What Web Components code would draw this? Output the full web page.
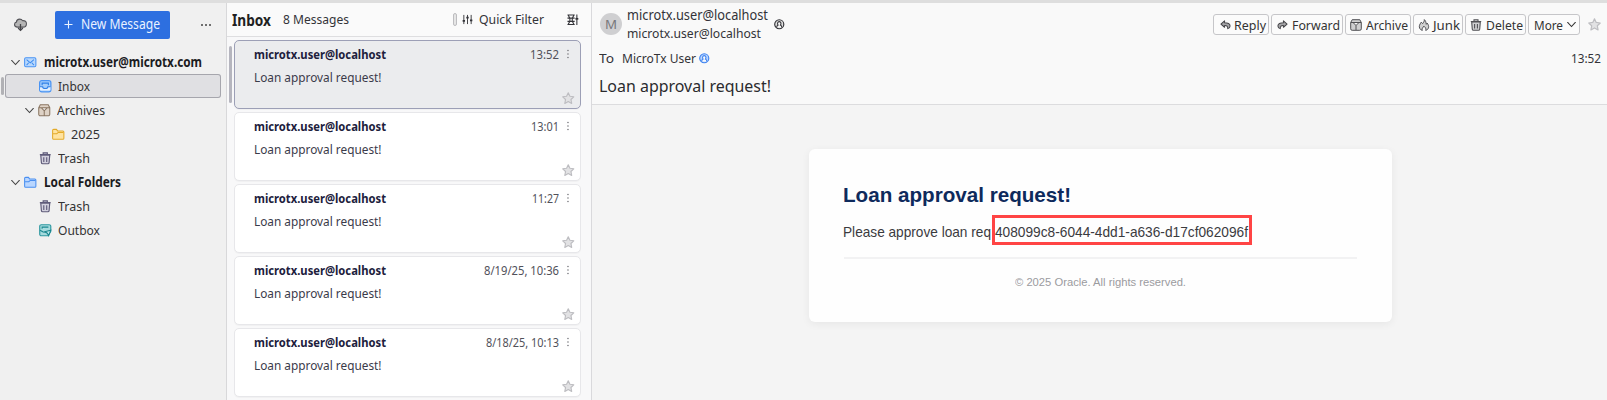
<!DOCTYPE html>
<html lang="en">
<head>
<meta charset="utf-8">
<title>Inbox</title>
<style>
html,body{margin:0;height:100%;overflow:hidden}
body{font-family:"Noto Sans","Open Sans",sans-serif;font-size:13.3px;color:#333338;background:#f4f4f4}
</style>
</head>
<body>
<mail-app></mail-app>
<script>
const ICONS = {
 chevron:'<path d="M1.8 3.8 6 8.2l4.2-4.4" fill="none" stroke="currentColor" stroke-width="1.15" stroke-linecap="round"/>',
 cloud:'<path d="M3.2 8.400C1.500 8.400.5 7.400.5 6c0-1.200.7-2 1.700-2.200C2.300 2.200 3.500 1 5.200 1c1.300 0 2.200.5 2.800 1.500 2-.3 3.500.8 3.500 2.800 0 1.900-1.200 3.100-3 3.100z" fill="#b5b5b5" stroke="#55555a"/><path d="M6 5.500v6M3.800 9.200 6 11.400l2.200-2.200" fill="none" stroke="#45454a" stroke-width="1.200"/>',
 mail:'<rect x=".6" y="1.600" width="10.800" height="8.800" rx="1.200" fill="#b9d8fc" stroke="#4a94f4"/><path d="m2.500 3.500 3.500 3 3.500-3M2.500 8.700l2-2.200M9.500 8.700l-2-2.200" fill="none" stroke="#3b8bf0"/>',
 inbox:'<rect x=".6" y=".6" width="10.800" height="10.800" rx="2" fill="#a4cdfb" stroke="#4a94f4" stroke-width="1.200"/><path d="M1 6.500h2.500c0 1 1 1.700 2.500 1.700s2.500-.7 2.500-1.700H11V10H1z" fill="#e4f0ff"/><path d="M1 6.500h2.500c0 1 1 1.700 2.500 1.700s2.500-.7 2.500-1.700H11M3 5V3h6v2" fill="none" stroke="#2f80e8" stroke-width="1.100"/>',
 archive:'<path d="M.7 3.500 2.200.7h7.600l1.500 2.800v6.300a1.500 1.500 0 0 1-1.500 1.500H2.200a1.500 1.500 0 0 1-1.500-1.500zM.7 3.500h10.600M6 6.500V11M3.300 3.800 6 6.500l2.700-2.700" fill="var(--fill,#ded2c6)" stroke="var(--line,#8a7662)"/>',
 folder:'<path d="M.6 3V2.300a1 1 0 0 1 1-1h2.600l1.200 1.500h5a1 1 0 0 1 1 1v6a1 1 0 0 1-1 1H1.600a1 1 0 0 1-1-1z" fill="var(--fill)" stroke="var(--line)"/><path d="M1 5.500h3.600L6 4.300h5" fill="none" stroke="var(--line)"/>',
 trash:'<path d="M4 2V.8h4V2M.8 2.500h10.400M1.700 3l.6 7.200a1.200 1.200 0 0 0 1.200 1.100h5a1.200 1.200 0 0 0 1.200-1.100l.6-7.200zM4.600 5v4.500M7.400 5v4.500" fill="var(--fill,#d3d1de)" stroke="var(--line,#5f5b7a)" stroke-width="1.100"/>',
 outbox:'<path d="M2.200.7h7.600a1.500 1.500 0 0 1 1.500 1.500V7l-2.600 4.300H2.200A1.500 1.500 0 0 1 .7 9.800V2.200A1.500 1.500 0 0 1 2.200.7z" fill="#a5dadd" stroke="#2c98a0" stroke-width="1.100"/><path d="M3 4.500V3h6M1 6l3 1.700 1.500.3M5.500 7.500 11.300 6l-2 5.300-1.300-2.500z" fill="#bfe8e9" stroke="#17858e"/>',
 sliders:'<path d="M2 1v10M6 1v10M10 1v10" fill="none" stroke="currentColor" stroke-width="1"/><path d="M.7 7.500h2.600M4.700 4h2.600M8.700 7h2.600" stroke="currentColor" stroke-width="2"/>',
 display:'<path d="M.5 1h7.500M.5 4.300h7.500M.5 7.700h7.500M.5 11h7.500M1 .8l2 3.500v3.400L1 11.200M7.500.8l-2 3.500v3.400l2 3.500M10.300.5v11" fill="none" stroke="currentColor" stroke-width="1.100"/><path d="M8.800 5h3" stroke="currentColor" stroke-width="1.800"/>',
 dots:'<circle cx="6" cy="1.800" r=".95"/><circle cx="6" cy="6" r=".95"/><circle cx="6" cy="10.200" r=".95"/>',
 star:'<path d="m6 .8 1.600 3.300 3.700.5-2.700 2.600.7 3.800L6 9.200 2.700 11l.7-3.800L.7 4.600l3.700-.5z" fill="#e2e2e4" stroke="#bdbdc1" stroke-width="1.100" stroke-linejoin="round"/>',
 person:'<circle cx="6" cy="6" r="5.200" fill="var(--fill,#ddd)" stroke="currentColor" stroke-width="1.300"/><path d="M3.300 9.800V8.300c0-.8.7-1 1.400-1.300C3.500 5.500 4 3 6 3s2.500 2.500 1.300 4c.7.3 1.400.5 1.400 1.300v1.500" fill="#fafafa" stroke="currentColor" stroke-width="1.200"/>',
 reply:'<path d="M5 2 1 5.500 5 9V7c2.500-.2 3.500.800 3.500 3.500C10 10 11 9 11 7.500 11 5 8.500 4 5 4z" fill="#a5a5a8" stroke="#444448" stroke-width="1.100" stroke-linejoin="round"/>',
 forward:'<path d="m7 2 4 3.500L7 9V7c-2.500-.2-3.500.800-3.500 3.500C2 10 1 9 1 7.500 1 5 3.500 4 7 4z" fill="#a5a5a8" stroke="#444448" stroke-width="1.100" stroke-linejoin="round"/>',
 junk:'<path d="M6.300.6c.3 2-1 2.800-1.600 4L3.200 3.200C1.700 5.500.7 7.200 1.700 9.300c.5 1.100 1.300 1.700 2.600 2.100-.6-1.700.2-2.900 1.700-4.200 1.500 1.300 2.300 2.500 1.700 4.200 1.500-.4 2.400-1.300 2.800-2.600.5-1.800-.3-3.200-1.300-4.700l-.9 1.200C8 3.400 7.600 1.600 6.300.6z" fill="#d0d0d0" stroke="#505055" stroke-width="1" stroke-linejoin="round"/>'
};
class UiIcon extends HTMLElement{
 connectedCallback(){
  const s=this.getAttribute('size')||12;
  this.attachShadow({mode:'open'}).innerHTML=`<style>:host{display:block;flex:none;width:${s}px;height:${s}px}svg{display:block;overflow:visible}</style><svg width="${s}" height="${s}" viewBox="0 0 12 12" fill="currentColor">${ICONS[this.getAttribute('name')]}</svg>`;
 }
}
/* One line of text, condensed or widened to the width given in pixels. */
class FitText extends HTMLElement{
 connectedCallback(){
  const w=+this.getAttribute('w');
  const r=this.attachShadow({mode:'open'});
  r.innerHTML=`<style>:host{display:block;flex:none;width:${w}px;white-space:nowrap}span{display:inline-block;transform-origin:0 50%}</style><span><slot></slot></span>`;
  const s=r.querySelector('span');
  s.style.transform=`scaleX(${w/s.getBoundingClientRect().width})`;
 }
}
class FolderRow extends HTMLElement{
 connectedCallback(){
  const a=n=>this.getAttribute(n);
  const on=this.hasAttribute('selected');
  this.attachShadow({mode:'open'}).innerHTML=`<style>
  :host{display:flex;align-items:center;height:24px;box-sizing:border-box;position:relative;margin:0 5px;padding-left:${+a('indent')}px;color:#333}
  :host([strong]){font-weight:700;color:#1c1c1f}
  :host([selected]){background:#e0e0e3;box-shadow:inset 0 0 0 1px #a6a6ad;border-radius:3px}
  i{position:absolute;left:-4px;top:3px;width:3px;height:18px;border-radius:2px;background:#b1b1b5}
  .c{width:14px;color:#444}
  fit-text{margin:0 0 1px 6px;line-height:18px}
  :host([strong]) fit-text{margin-left:7px}
  </style>${on?'<i></i>':''}<div class="c">${this.hasAttribute('open')?'<ui-icon name="chevron" size="11"></ui-icon>':''}</div>
  <ui-icon name="${a('icon')}" size="12.500"></ui-icon><fit-text w="${a('w')}">${a('label')}</fit-text>`;
 }
}
class SideBar extends HTMLElement{
 connectedCallback(){
  this.attachShadow({mode:'open'}).innerHTML=`<style>
  :host{display:block;width:227px;box-sizing:border-box;background:#f0f0f0;border-right:1px solid #d8d8da}
  header{display:flex;align-items:center;height:29px;padding:7px 0 11px 14px}
  button{all:unset;display:flex;align-items:center;box-sizing:border-box;width:115px;height:28px;margin-left:28px;padding-left:9px;background:#2d6fe0;color:#eaf2ff;border-radius:2px;font-size:13.800px}
  button fit-text{margin-bottom:1px;line-height:20px}
  button svg{margin-right:8px}
  .m{display:flex;gap:2px;margin-left:31px}.m b{width:2px;height:2px;border-radius:1px;background:#444}
  .b{--fill:#b9d6ff;--line:#4a8ff0}.y{--fill:#ffe3a0;--line:#e3aa28}
  </style><header><ui-icon name="cloud" size="13"></ui-icon>
  <button><svg width="9" height="9"><path d="M4.500 .5v8M.5 4.500h8" stroke="#eaf2ff" stroke-width="1.100"/></svg><fit-text w="79">New Message</fit-text></button>
  <div class="m"><b></b><b></b><b></b></div></header>
  <folder-row strong open indent="5" icon="mail" w="158" label="microtx.user@microtx.com"></folder-row>
  <folder-row selected indent="20" icon="inbox" w="32" label="Inbox"></folder-row>
  <folder-row open indent="19" icon="archive" w="48" label="Archives"></folder-row>
  <folder-row class="y" indent="33" icon="folder" w="29" label="2025"></folder-row>
  <folder-row indent="20" icon="trash" w="32" label="Trash"></folder-row>
  <folder-row class="b" strong open indent="5" icon="folder" w="77" label="Local Folders"></folder-row>
  <folder-row indent="20" icon="trash" w="32" label="Trash"></folder-row>
  <folder-row indent="20" icon="outbox" w="42" label="Outbox"></folder-row>`;
 }
}
class MessageCard extends HTMLElement{
 connectedCallback(){
  const a=n=>this.getAttribute(n);
  this.attachShadow({mode:'open'}).innerHTML=`<style>
  :host{display:block;position:relative;box-sizing:border-box;height:69px;margin-bottom:3px;padding:3px 6px 0 19px;background:#fff;border:1px solid #e7e7ea;border-radius:5px;box-shadow:0 1px 1px #00000008}
  :host([selected]){background:#ebecee;border-color:#9c9fb6}
  i{position:absolute;left:-6px;top:5px;width:3px;height:57px;border-radius:2px;background:#b5b5be}
  .r{display:flex;align-items:center;height:20px;line-height:20px}
  .n{font-weight:700;color:#20203c;font-size:13px}
  .t{margin-left:auto;color:#51515a}.s{margin-top:3px;color:#3b3b4a}.s fit-text{margin-bottom:1px}
  .d{color:#77777c;margin:0 1px 0 4px}
  .f{display:flex;justify-content:flex-end;margin-top:5px}
  </style>${this.hasAttribute('selected')?'<i></i>':''}
  <div class="r"><fit-text class="n" w="132">microtx.user@localhost</fit-text><fit-text class="t" w="${a('w')}">${a('time')}</fit-text><ui-icon class="d" name="dots" size="10"></ui-icon></div>
  <div class="r s"><fit-text w="127.500">Loan approval request!</fit-text></div>
  <div class="f"><ui-icon name="star" size="12.500"></ui-icon></div>`;
 }
}
class MessageList extends HTMLElement{
 connectedCallback(){
  this.attachShadow({mode:'open'}).innerHTML=`<style>
  :host{display:block;width:365px;box-sizing:border-box;background:#f8f8f9;border-right:1px solid #d9d9dc;overflow:hidden}
  header{display:flex;align-items:center;height:33px;padding:0 0 0 5px;background:#fafafa;border-bottom:1px solid #dedee0}
  .h{font-weight:700;font-size:15.500px;color:#1f1f22}
  u{width:2px;height:11px;border:1px solid #bdbdc0;background:#e5e5e5;border-radius:2px;margin:0 5px 0 104px}
  .q{margin-bottom:1px}
  main{padding:3px 10px 0 7px}
  </style><header><fit-text class="h" w="39">Inbox</fit-text><fit-text class="q" style="margin-left:12px" w="66">8 Messages</fit-text><u></u><ui-icon name="sliders" size="11"></ui-icon><fit-text class="q" style="margin-left:6px" w="65">Quick Filter</fit-text><ui-icon style="margin-left:23px" name="display" size="11.500"></ui-icon></header>
  <main><message-card selected time="13:52" w="29"></message-card><message-card time="13:01" w="28"></message-card><message-card time="11:27" w="27"></message-card><message-card time="8/19/25, 10:36" w="75"></message-card><message-card time="8/18/25, 10:13" w="73"></message-card></main>`;
 }
}
class ToolButton extends HTMLElement{
 connectedCallback(){
  this.attachShadow({mode:'open'}).innerHTML=`<style>:host{display:flex;align-items:center;box-sizing:border-box;height:21px;border:1px solid #c6c6c9;border-radius:3px;background:#fbfbfb;color:#333;--fill:#cfcfd1;--line:#505054;line-height:18px}</style><slot></slot>`;
 }
}
class MessageHead extends HTMLElement{
 connectedCallback(){
  const b=(w,pl,icon,gap,tw,t,size=12)=>`<tool-button style="width:${w}px;padding-left:${pl}px;margin-right:2px"><ui-icon name="${icon}" size="${size}"></ui-icon><fit-text style="margin-left:${gap}px" w="${tw}">${t}</fit-text></tool-button>`;
  this.attachShadow({mode:'open'}).innerHTML=`<style>
  :host{display:block;height:102px;box-sizing:border-box;background:#f9f9f9;border-bottom:1px solid #dcdcde;padding:0 6px 0 7px}
  .top{display:flex;height:43px}.av{display:flex;align-items:center;justify-content:center;width:22px;height:22px;border-radius:50%;background:#cfcfd1;color:#77777b;margin:10px 0 0 1px}
  .who{margin:3px 0 0 5px;width:146px}.who>*{height:18px;line-height:18px}
  .bar{display:flex;margin:11px 0 0 auto;height:21px;align-items:center}
  .to{display:flex;align-items:center;height:26px}.to fit-text{margin-bottom:2px}.sub{font-size:16.500px;height:28px;display:flex;align-items:center;color:#2b2b2e}.sub fit-text{margin-bottom:2px}
  </style><div class="top"><div class="av">M</div><div class="who"><fit-text w="141" style="font-size:14px">microtx.user@localhost</fit-text><fit-text w="134">microtx.user@localhost</fit-text></div><ui-icon name="person" size="10.500" style="margin:16px 0 0 .5px"></ui-icon>
  <div class="bar">${b(55.5,6,'reply',3,32,'Reply',11)}${b(72,5,'forward',4,48,'Forward',11)}${b(66,4,'archive',4,42,'Archive')}${b(50.5,4,'junk',3,27,'Junk')}${b(61,4,'trash',4,37,'Delete')}<tool-button style="width:51.500px;padding-left:5px"><fit-text w="29">More</fit-text><ui-icon name="chevron" size="11" style="margin-left:3px"></ui-icon></tool-button><ui-icon name="star" size="13" style="margin-left:8.500px"></ui-icon></div></div>
  <div class="to"><fit-text w="15">To</fit-text><fit-text style="margin-left:8px" w="74">MicroTx User</fit-text><ui-icon name="person" size="10.500" style="margin:0 0 1px 3px;color:#3f83f0;--fill:#b9d6ff"></ui-icon><fit-text style="margin-left:auto" w="30">13:52</fit-text></div>
  <div class="sub"><fit-text w="172">Loan approval request!</fit-text></div>`;
 }
}
class MailBody extends HTMLElement{
 connectedCallback(){
  this.attachShadow({mode:'open'}).innerHTML=`<style>
  :host{display:block;padding:44px 0 0 217px;font-family:"Liberation Sans",Arial,sans-serif;color:#3b3b3e}
  article{box-sizing:border-box;width:583px;height:173px;background:#fefefe;border-radius:6px;box-shadow:0 2px 9px #0000000f;padding:33px 34px 0 34px}
  h1{margin:0;font-size:20.500px;line-height:26px;color:#0e2a5c}
  p{display:flex;align-items:center;margin:7px 0 0;height:30px;font-size:14.500px}
  p>fit-text{padding-top:3px}
  mark{display:flex;align-items:center;box-sizing:border-box;width:260px;height:30px;margin-left:1px;border:3px solid #ff4444;background:none;color:inherit}
  mark fit-text{padding-top:3px}
  hr{border:0;height:2px;background:#f2f2f3;margin:12px 1px 0 1px}
  footer{display:flex;justify-content:center;margin-top:15px;font-size:11.500px;line-height:16px;color:#9b9b9e}
  </style><article><h1><fit-text w="228">Loan approval request!</fit-text></h1><p><fit-text w="148">Please approve loan req</fit-text><mark><fit-text w="253">408099c8-6044-4dd1-a636-d17cf062096f</fit-text></mark></p><hr><footer><fit-text w="171">© 2025 Oracle. All rights reserved.</fit-text></footer></article>`;
 }
}
class MailApp extends HTMLElement{
 connectedCallback(){
  this.attachShadow({mode:'open'}).innerHTML=`<style>
  :host{display:flex;height:400px;box-sizing:border-box;border-top:3px solid #dedede;background:#f4f4f4}
  section{flex:1;min-width:0}
  </style><side-bar></side-bar><message-list></message-list><section><message-head></message-head><mail-body></mail-body></section>`;
 }
}
customElements.define('ui-icon',UiIcon);
customElements.define('fit-text',FitText);
customElements.define('folder-row',FolderRow);
customElements.define('side-bar',SideBar);
customElements.define('message-card',MessageCard);
customElements.define('message-list',MessageList);
customElements.define('tool-button',ToolButton);
customElements.define('message-head',MessageHead);
customElements.define('mail-body',MailBody);
customElements.define('mail-app',MailApp);
</script>
</body>
</html>
